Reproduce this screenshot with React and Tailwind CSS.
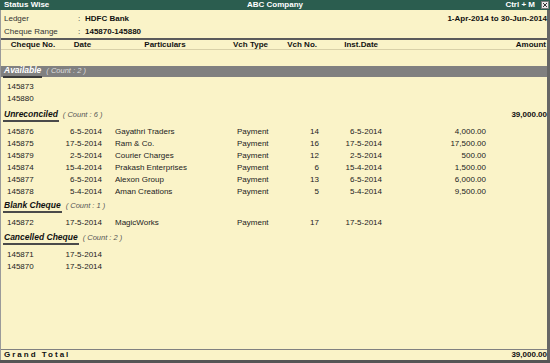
import React from "react";

const COLS = "grid grid-cols-[64px_38px_127px_45px_45px_63px_104px_59px]";

function Row({ c }) {
  return (
    <div className={`${COLS} h-[12px] items-center text-[#222]`}>
      <div className="pl-[6px]">{c[0]}</div>
      <div className="text-right pr-[1px]">{c[1]}</div>
      <div className="pl-[12px] whitespace-nowrap">{c[2]}</div>
      <div className="pl-[7px]">{c[3]}</div>
      <div className="text-right pr-[1px]">{c[4]}</div>
      <div className="text-right pr-[1px]">{c[5]}</div>
      <div className="text-right pr-[1px]">{c[6]}</div>
      <div className="text-right">{c[7]}</div>
    </div>
  );
}

function Heading({ title, count, total, h, pt }) {
  return (
    <div className={`flex items-start ${h} ${pt}`}>
      <div className="flex items-end pl-[2px]">
        <span className="border-b-2 border-[#4a4a4a] px-[1px] leading-[11px] text-[8.5px] font-bold italic text-[#111]">
          {title}
        </span>
        <span className="ml-[4px] mb-[2px] leading-[11px] text-[7.5px] italic text-[#555]">
          ( Count : {count} )
        </span>
      </div>
      {total && (
        <div className="ml-auto leading-[11px] font-bold text-[#111]">{total}</div>
      )}
    </div>
  );
}

export default function App() {
  return (
    <div className="w-[550px] h-[363px] bg-[#FAF3C8] flex flex-col overflow-hidden font-['Liberation_Sans',Arial,sans-serif] text-[8px] leading-none">
      {/* Title bar */}
      <div className="h-[10px] bg-[#2b5d4f] grid grid-cols-3 items-center text-white font-bold shrink-0">
        <div className="pl-[4px]">Status Wise</div>
        <div className="text-center">ABC Company</div>
        <div className="flex items-center justify-end pr-[1px]">
          <span className="mr-[6px]">Ctrl + M</span>
          <span className="w-[8px] h-[8px] bg-[#e8e8e8] border border-[#7a7a7a] flex items-center justify-center">
            <svg width="6" height="6" viewBox="0 0 6 6">
              <path d="M1 1L5 5M5 1L1 5" stroke="#333" strokeWidth="1" />
            </svg>
          </span>
        </div>
      </div>

      {/* Body */}
      <div className="flex-1 flex flex-col border-l border-r-[3px] border-l-[#9a9a9a] border-r-[#666]">
        {/* Ledger info */}
        <div className="pt-[3px] h-[28px] flex flex-col">
          <div className="flex items-center h-[12px]">
            <div className="w-[77px] pl-[3px] text-[#333]">Ledger</div>
            <div className="w-[7px] text-[#333]">:</div>
            <div className="font-bold text-[#111]">HDFC Bank</div>
            <div className="ml-auto font-bold text-[#111]">1-Apr-2014 to 30-Jun-2014</div>
          </div>
          <div className="flex items-center h-[12px] mt-[1px]">
            <div className="w-[77px] pl-[3px] text-[#333]">Cheque Range</div>
            <div className="w-[7px] text-[#333]">:</div>
            <div className="font-bold text-[#111]">145870-145880</div>
          </div>
        </div>

        {/* Column header */}
        <div className={`${COLS} h-[12px] items-center border-t-2 border-t-[#5a5a5a] border-b border-b-[#d8d0a8] font-bold text-[#111]`}>
          <div className="text-center">Cheque No.</div>
          <div className="text-center pr-[3px]">Date</div>
          <div className="text-center pr-[3px]">Particulars</div>
          <div className="text-center pr-[4px] whitespace-nowrap">Vch Type</div>
          <div className="text-right pr-[3px]">Vch No.</div>
          <div className="text-right pr-[5px]">Inst.Date</div>
          <div className="col-span-2 text-right">Amount</div>
        </div>

        {/* Content */}
        <div className="flex-1 flex flex-col">
          <div className="h-[16px]" />
          <div className="h-[11px] bg-[#808080] flex items-end pl-[2px]">
            <span className="border-b-2 border-[#3a3a3a] px-[1px] leading-[11px] text-[8.5px] font-bold italic text-white translate-y-[1px]">
              Available
            </span>
            <span className="ml-[4px] mb-[1px] leading-[10px] text-[7.5px] italic text-[#dedede]">
              ( Count : 2 )
            </span>
          </div>
          <div className="h-[4px]" />
          <Row c={["145873"]} />
          <Row c={["145880"]} />

          <Heading title="Unreconciled" count="6" total="39,000.00" h="h-[21px]" pt="pt-[4px]" />
          <Row c={["145876", "6-5-2014", "Gayathri Traders", "Payment", "14", "6-5-2014", "4,000.00"]} />
          <Row c={["145875", "17-5-2014", "Ram & Co.", "Payment", "16", "17-5-2014", "17,500.00"]} />
          <Row c={["145879", "2-5-2014", "Courier Charges", "Payment", "12", "2-5-2014", "500.00"]} />
          <Row c={["145874", "15-4-2014", "Prakash Enterprises", "Payment", "6", "15-4-2014", "1,500.00"]} />
          <Row c={["145877", "6-5-2014", "Alexon Group", "Payment", "13", "6-5-2014", "6,000.00"]} />
          <Row c={["145878", "5-4-2014", "Aman Creations", "Payment", "5", "5-4-2014", "9,500.00"]} />

          <Heading title="Blank Cheque" count="1" h="h-[19px]" pt="pt-[2px]" />
          <Row c={["145872", "17-5-2014", "MagicWorks", "Payment", "17", "17-5-2014"]} />

          <Heading title="Cancelled Cheque" count="2" h="h-[20px]" pt="pt-[3px]" />
          <Row c={["145871", "17-5-2014"]} />
          <Row c={["145870", "17-5-2014"]} />
        </div>

        {/* Grand total */}
        <div className="h-[11px] border-t border-[#808080] flex items-center font-bold text-[#111]">
          <div className="pl-[3px] tracking-[2px]">Grand Total</div>
          <div className="ml-auto">39,000.00</div>
        </div>
      </div>
      <div className="h-[3px] bg-[#555] shrink-0" />
    </div>
  );
}
